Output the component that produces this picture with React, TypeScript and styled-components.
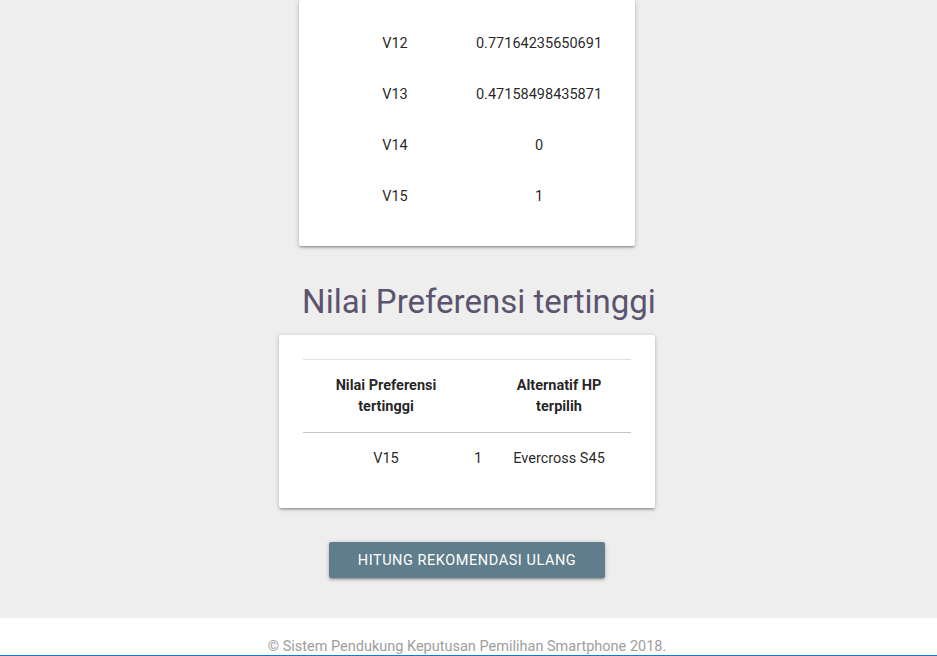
import React from "react";
import styled, { createGlobalStyle } from "styled-components";

const Global = createGlobalStyle`
  html, body { margin: 0; padding: 0; }
  body {
    background: #eeeeee;
    font-family: Roboto, "Liberation Sans", sans-serif;
    font-size: 14.5px;
    line-height: 21px;
    color: rgba(0,0,0,0.87);
  }
`;

const Main = styled.main`
  display: flex;
  flex-direction: column;
  align-items: center;
  padding-right: 3px;
`;

const Card = styled.div<{ $w: number; $pt?: number }>`
  width: ${(p) => p.$w}px;
  box-sizing: border-box;
  background: #fff;
  border-radius: 2px;
  padding: ${(p) => p.$pt ?? 24}px 24px 24px;
  box-shadow: 0 2px 2px 0 rgba(0,0,0,.14), 0 3px 1px -2px rgba(0,0,0,.12), 0 1px 5px 0 rgba(0,0,0,.2);
`;

const Table = styled.table<{ $top?: boolean }>`
  width: 100%;
  border-collapse: collapse;
  table-layout: fixed;
  border-top: ${(p) => (p.$top ? "1px solid rgba(0,0,0,0.12)" : "none")};
`;

const Row = styled.tr<{ $line?: boolean }>`
  border-bottom: ${(p) => (p.$line ? "1px solid rgba(0,0,0,0.12)" : "none")};
`;

const Td = styled.td`
  padding: 15px 5px;
  text-align: center;
  vertical-align: middle;
`;

const Th = styled.th`
  padding: 15px 5px;
  text-align: center;
  font-weight: 700;
  vertical-align: middle;
`;

const Heading = styled.h4`
  margin: 38px 0 15px;
  padding-left: 24px;
  font-size: 33px;
  line-height: 36px;
  font-weight: 400;
  color: #5c546e;
`;

const Button = styled.button`
  margin: 34px 0 40px;
  height: 36px;
  width: 276px;
  padding: 0;
  border: none;
  border-radius: 2px;
  background: #607d8b;
  color: #fff;
  font-family: Roboto, "Liberation Sans", sans-serif;
  font-size: 14.5px;
  font-weight: 400;
  letter-spacing: 0.55px;
  text-transform: uppercase;
  box-shadow: 0 2px 2px 0 rgba(0,0,0,.14), 0 3px 1px -2px rgba(0,0,0,.12), 0 1px 5px 0 rgba(0,0,0,.2);
`;

const Footer = styled.footer`
  background: #fff;
  height: 37px;
  overflow: hidden;
  box-sizing: border-box;
  padding-top: 18px;
  text-align: center;
  color: #9e9e9e;
  padding-right: 3px;
`;

const BlueBar = styled.div`
  height: 4px;
  background: #1976d2;
`;

const rows = [
  ["V12", "0.77164235650691"],
  ["V13", "0.47158498435871"],
  ["V14", "0"],
  ["V15", "1"],
];

export default function App() {
  return (
    <>
      <Global />
      <Main>
        <Card $w={336} $pt={18}>
          <Table>
            <tbody>
              {rows.map(([a, b]) => (
                <Row key={a}>
                  <Td>{a}</Td>
                  <Td>{b}</Td>
                </Row>
              ))}
            </tbody>
          </Table>
        </Card>
        <Heading>Nilai Preferensi tertinggi</Heading>
        <Card $w={376}>
          <Table $top>
            <colgroup>
              <col style={{ width: 166 }} />
              <col style={{ width: 18 }} />
              <col />
            </colgroup>
            <thead>
              <Row $line>
                <Th>Nilai Preferensi tertinggi</Th>
                <Th></Th>
                <Th>Alternatif HP terpilih</Th>
              </Row>
            </thead>
            <tbody>
              <Row>
                <Td>V15</Td>
                <Td>1</Td>
                <Td>Evercross S45</Td>
              </Row>
            </tbody>
          </Table>
        </Card>
        <Button>Hitung Rekomendasi Ulang</Button>
      </Main>
      <Footer>© Sistem Pendukung Keputusan Pemilihan Smartphone 2018.</Footer>
      <BlueBar />
    </>
  );
}
